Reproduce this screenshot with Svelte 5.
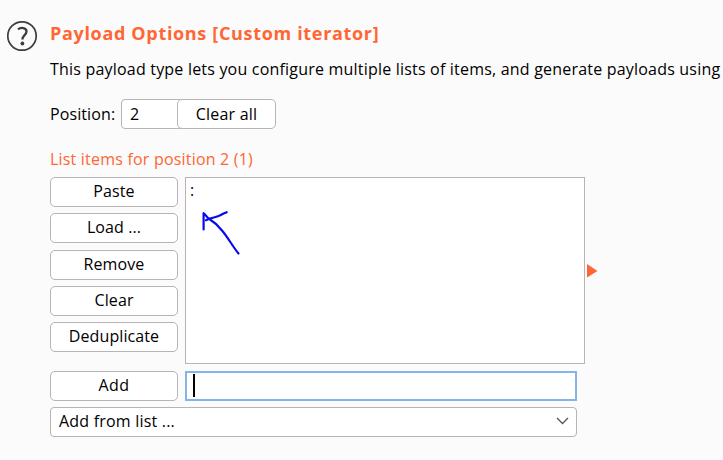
<script>
  const actions = ['Paste', 'Load ...', 'Remove', 'Clear', 'Deduplicate'];
</script>

<main>
  <svg class="help" width="32" height="32" viewBox="0 0 32 32" fill="none" stroke="#3d3d3d">
    <circle cx="16" cy="16" r="14.2" stroke-width="1.7" />
    <path d="M12 9.3C14.3 7.4 20.5 7.1 20.5 11.5C20.5 15 16.4 15.3 16.4 19.5" stroke-width="2.3" />
    <circle cx="16.4" cy="23.5" r="1.9" fill="#3d3d3d" stroke="none" />
  </svg>
  <section>
    <h1><span>Payload Options [Custom iterator]</span></h1>
    <p class="intro"><span>This payload type lets you configure multiple lists of items, and generate payloads using</span></p>
    <div class="position">
      <span class="poslabel">Position:</span>
      <div class="num">2</div>
      <button class="clearall">Clear all</button>
    </div>
    <h2><span>List items for position 2 (1)</span></h2>
    <div class="lists">
      <div class="actions">
        {#each actions as action}
          <button>{action}</button>
        {/each}
      </div>
      <div class="box">
        <span>:</span>
        <svg class="ink" width="44" height="50" viewBox="0 0 44 50" fill="none" stroke="#0909ee" stroke-width="2.2" stroke-linecap="round" stroke-linejoin="round">
          <path d="M3.6 20.5V4.2C5.3 5 6 7.4 8.7 9.5C13.5 12.5 18.5 17 22 21.5C28 28.500 32 36.500 38.500 44.500M6 11.200C11 8.500 17 8.500 20.500 6.200C22.500 5.100 24 4.500 26.700 3.200" />
        </svg>
      </div>
      <svg class="marker" width="11" height="14" viewBox="0 0 11 14"><path d="M0 0L10.500 7L0 13.500Z" fill="#ff6633" /></svg>
    </div>
    <div class="addrow">
      <button class="add">Add</button>
      <div class="entry"><i></i></div>
    </div>
    <div class="select">
      <span>Add from list ...</span>
      <svg width="13" height="8" viewBox="0 0 13 8" fill="none" stroke="#555" stroke-width="1.300"><path d="M1 1L6.500 6.500L12 1" /></svg>
    </div>
  </section>
</main>

<style>
  :global(body) { margin: 0; background: #fbfbfb; overflow: hidden; }
  main {
    box-sizing: border-box;
    width: 723px;
    height: 460px;
    display: flex;
    overflow: hidden;
    background: #fbfbfb;
    color: #000;
    font: 16px/22px 'Open Sans', 'Noto Sans', sans-serif;
    letter-spacing: 0.2px;
    white-space: nowrap;
  }
  .help { flex: none; margin: 20px 12px 0 6px; }
  section { flex: none; width: 673px; }
  h1, h2, p { margin: 0; }
  h1 { height: 24px; margin-top: 21px; color: #ff6633; font-size: 18px; line-height: 24px; font-weight: 700; letter-spacing: 0.67px; }
  .intro { height: 22px; margin-top: 13px; }
  .position { display: flex; height: 30px; margin-top: 19px; line-height: 30px; }
  .poslabel { width: 71px; letter-spacing: 0.1px; }
  button, .num, .box, .entry, .select { box-sizing: border-box; border: 1px solid #b8b3b5; background: #fff; }
  button {
    display: block;
    width: 128px;
    height: 30px;
    padding: 0 0 2px;
    border-radius: 5px;
    color: #000;
    font: inherit;
    letter-spacing: 0.1px;
    line-height: 26px;
    text-align: center;
  }
  .num { width: 60px; height: 30px; padding-left: 8px; border-radius: 4px 0 0 4px; line-height: 28px; }
  .clearall { width: 99px; margin-left: -4px; padding: 0; line-height: 28px; letter-spacing: 0.2px; }
  .add { letter-spacing: 0.5px; }
  h2 { height: 22px; margin-top: 19px; color: #ff6633; font-size: 16px; font-weight: 400; line-height: 22px; }
  .lists { display: flex; height: 187px; margin-top: 7px; }
  .actions { display: flex; flex-direction: column; justify-content: space-between; width: 128px; height: 175px; margin-right: 7px; }
  .box { position: relative; width: 400px; height: 187px; padding: 1px 4px; }
  .ink { position: absolute; left: 14px; top: 31px; }
  .marker { margin: 87px 0 0 2px; }
  .addrow { display: flex; gap: 7px; margin-top: 7px; }
  .entry { width: 392px; height: 30px; border: 2px solid #85b4e6; }
  .entry i { display: block; width: 2px; height: 23px; margin: 1px 0 0 6px; background: #000; }
  .select { display: flex; justify-content: space-between; align-items: center; width: 527px; height: 30px; margin-top: 6px; padding: 0 7px 2px 8px; border-radius: 4px; }
</style>
